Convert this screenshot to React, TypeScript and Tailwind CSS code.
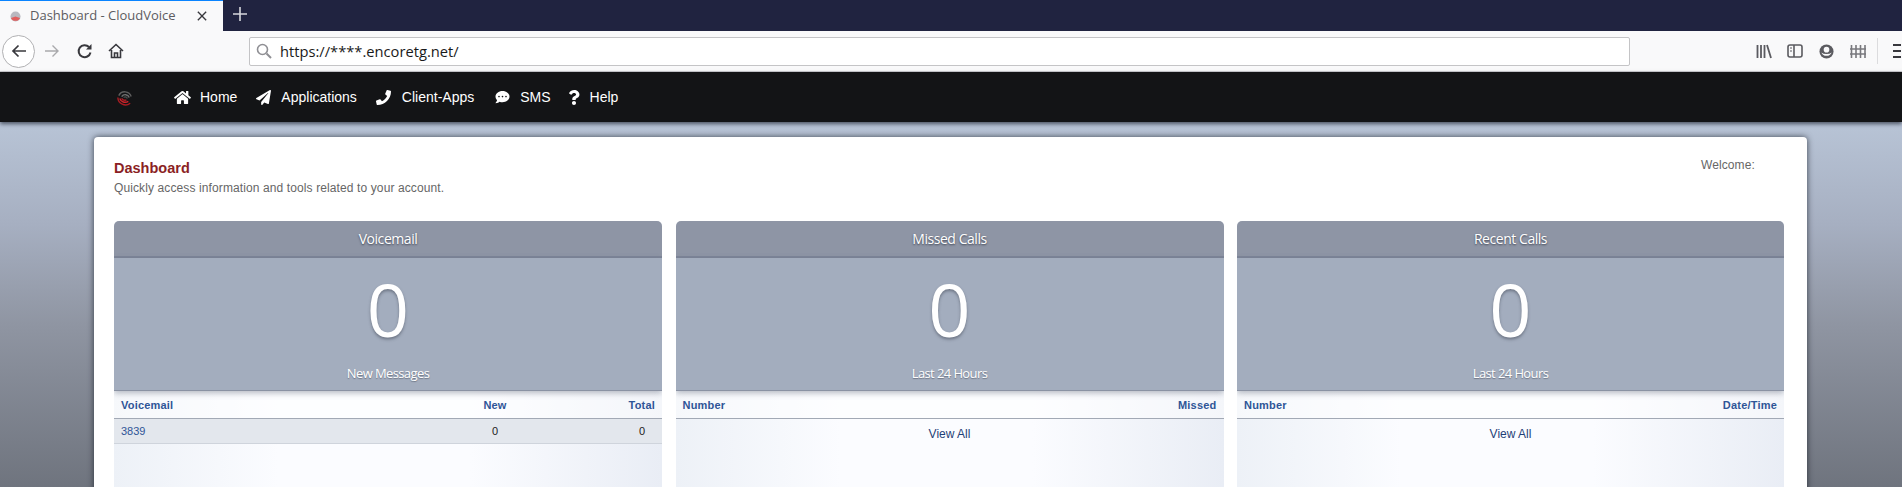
import React from 'react';
import { FaHome, FaPaperPlane, FaPhone, FaCommentDots, FaQuestion } from 'react-icons/fa';

const navItems = [
  { label: 'Home', icon: <FaHome className="w-[17px] h-[15px]" />, ml: 'ml-[40px]', gap: 'gap-[9px]' },
  { label: 'Applications', icon: <FaPaperPlane className="w-[15px] h-[15px]" />, ml: 'ml-[19px]', gap: 'gap-[10px]' },
  { label: 'Client-Apps', icon: <FaPhone className="w-[15px] h-[15px]" />, ml: 'ml-[19px]', gap: 'gap-[11px]' },
  { label: 'SMS', icon: <FaCommentDots className="w-[15px] h-[14px]" />, ml: 'ml-[21px]', gap: 'gap-[10px]' },
  { label: 'Help', icon: <FaQuestion className="w-[12px] h-[15px]" />, ml: 'ml-[17px]', gap: 'gap-[10px]' },
];

const BrowserChrome = () => (
  <div className="font-['Open_Sans',sans-serif]">
    {/* tab strip */}
    <div className="h-[31px] bg-[#202340] flex">
      <div className="w-[223px] h-full bg-[#f9f9fa] border-t border-[#0a84ff] flex items-center pl-[10px] text-[#5c5c61]">
        <svg viewBox="0 0 12 12" className="w-[11px] h-[11px] shrink-0">
          <circle cx="6" cy="6" r="5.5" fill="#b9b9c0" />
          <path d="M1 7.5 A5.5 5.5 0 0 0 11 7.5 L6 6 Z" fill="#e0605f" />
        </svg>
        <span className="ml-[9px] text-[13px] w-[167px] whitespace-nowrap">Dashboard - CloudVoice</span>
        <svg viewBox="0 0 12 12" className="w-[10px] h-[10px] shrink-0" stroke="#38383d" strokeWidth="1.6">
          <path d="M1 1 L11 11 M11 1 L1 11" />
        </svg>
      </div>
      <svg viewBox="0 0 14 14" className="w-[14px] h-[14px] ml-[10px] mt-[7px]" stroke="#d6d7dd" strokeWidth="1.6">
        <path d="M7 0 V14 M0 7 H14" />
      </svg>
    </div>
    {/* toolbar */}
    <div className="h-[41px] bg-[#f9f9fa] border-b border-[#cfcfd2] flex items-center">
      <div className="ml-[2px] w-[33px] h-[33px] rounded-full border border-[#b1b1b3] bg-white flex items-center justify-center">
        <svg viewBox="0 0 16 16" className="w-[16px] h-[16px]" fill="none" stroke="#38383d" strokeWidth="1.7">
          <path d="M15 8 H2 M7.5 2.5 L2 8 L7.5 13.5" />
        </svg>
      </div>
      <svg viewBox="0 0 16 16" className="w-[16px] h-[16px] ml-[9px]" fill="none" stroke="#a9a9ac" strokeWidth="1.4">
        <path d="M1 8 H14 M8.5 2.5 L14 8 L8.5 13.5" />
      </svg>
      <svg viewBox="0 0 16 16" className="w-[16px] h-[16px] ml-[17px]" fill="none" stroke="#38383d" strokeWidth="2">
        <path d="M13.5 9.5 A6 6 0 1 1 12 4" />
        <path d="M14.5 1 V6.5 H9 Z" fill="#38383d" stroke="none" />
      </svg>
      <svg viewBox="0 0 16 16" className="w-[16px] h-[16px] ml-[15px]" fill="none" stroke="#38383d" strokeWidth="1.6">
        <path d="M1 8 L8 1.5 L15 8 M3.5 7 V14.5 H12.5 V7" />
        <path d="M6.5 14.5 V10 H9.5 V14.5" />
      </svg>
      <div className="ml-[125px] w-[1381px] h-[29px] bg-white border border-[#c4c4c6] rounded-[2px] flex items-center">
        <svg viewBox="0 0 16 16" className="w-[16px] h-[16px] ml-[6px]" fill="none" stroke="#8f8f94" strokeWidth="1.6">
          <circle cx="6.5" cy="6.5" r="5" />
          <path d="M10.5 10.5 L15 15" strokeWidth="2" />
        </svg>
        <span className="ml-[8px] text-[14.7px] text-[#1a1a1a] whitespace-nowrap">https://****.encoretg.net/</span>
      </div>
      <svg viewBox="0 0 16 16" className="w-[16px] h-[16px] ml-[126px]" fill="none" stroke="#5b5b60" strokeWidth="1.8">
        <path d="M1.5 2 V15 M5 2 V15 M8.5 2 V15 M11 2 L15 15" />
      </svg>
      <svg viewBox="0 0 16 16" className="w-[16px] h-[16px] ml-[15px]" fill="none" stroke="#5b5b60" strokeWidth="1.6">
        <rect x="1" y="2" width="14" height="12" rx="2" />
        <path d="M7 2 V14" />
        <path d="M3 5 H5 M3 8 H5" strokeWidth="1" />
      </svg>
      <svg viewBox="0 0 16 16" className="w-[15px] h-[15px] ml-[16px]">
        <circle cx="8" cy="8" r="7.5" fill="#5b5b60" />
        <path d="M2.5 9 A6 6 0 0 0 13.5 9 A6.5 3.5 0 0 1 2.5 9 Z" fill="#f9f9fa" />
        <circle cx="8" cy="6" r="3" fill="#f9f9fa" />
      </svg>
      <svg viewBox="0 0 16 16" className="w-[16px] h-[16px] ml-[16px]" fill="none" stroke="#78787d" strokeWidth="1.8">
        <path d="M1.5 2 V15 M6 2 V15 M10.5 2 V15 M15 2 V15 M0 6 H16 M0 11 H16" strokeWidth="1.6" />
      </svg>
      <div className="w-px h-[26px] bg-[#dcdcde] ml-[11px]" />
      <div className="ml-[15px] w-[8px] flex flex-col gap-[4px] overflow-hidden">
        <div className="h-[2px] w-[12px] bg-[#38383d]" />
        <div className="h-[2px] w-[12px] bg-[#38383d]" />
        <div className="h-[2px] w-[12px] bg-[#38383d]" />
      </div>
    </div>
  </div>
);

const Logo = () => (
  <svg viewBox="0 0 20 20" className="w-[19px] h-[19px]" fill="none" strokeWidth="1.5">
    <path d="M4 8 A7 7 0 0 1 17 9" stroke="#5e5e5e" />
    <path d="M7 9 A4.5 4.5 0 0 1 15 10" stroke="#6e6e6e" />
    <path d="M9 10 A2.5 2.5 0 0 1 13 11" stroke="#4a4a4a" />
    <path d="M3 10 A8 8 0 0 0 16 16" stroke="#a81d23" />
    <path d="M5 11 A6 6 0 0 0 14 14" stroke="#d2232a" />
    <path d="M7 11 A4 4 0 0 0 12 12.5" stroke="#a81d23" />
  </svg>
);

const NavBar = () => (
  <div className="h-[50px] bg-[#131416] flex items-center pl-[115px] font-['Liberation_Sans',sans-serif] text-[14px] text-white shadow-[0_2px_4px_rgba(30,35,50,0.7)] relative">
    <Logo />
    {navItems.map((item) => (
      <div key={item.label} className={`flex items-center ${item.gap} ${item.ml}`}>
        {item.icon}
        <span>{item.label}</span>
      </div>
    ))}
  </div>
);

interface PanelProps {
  title: string;
  caption: string;
  children: React.ReactNode;
}

const Panel: React.FC<PanelProps> = ({ title, caption, children }) => (
  <div className="rounded-t-[5px] overflow-hidden h-[400px] bg-[linear-gradient(to_right,#edf1f7,#fbfcff_30%,#fbfcff_65%,#e9edf5)]">
    <div className="h-[37px] bg-[#8e95a5] border-b-2 border-[#7d8598] flex items-center justify-center font-['Open_Sans',sans-serif] text-[14px] tracking-[-0.45px] text-white [text-shadow:0_1px_2px_rgba(40,45,60,0.8)]">
      {title}
    </div>
    <div className="h-[133px] bg-[#a3adbe] border-b border-[#8a92a3] shadow-[0_2px_6px_rgba(90,100,120,0.45)] flex flex-col items-center font-['Open_Sans',sans-serif] text-white relative">
      <div className="text-[74px] leading-[74px] mt-[14px] [text-shadow:0_2px_3px_rgba(60,65,80,0.5)]">0</div>
      <div className="text-[13px] tracking-[-0.6px] leading-[18px] mt-[18px] [text-shadow:0_1px_1px_rgba(60,65,80,0.5)]">{caption}</div>
    </div>
    {children}
  </div>
);

const headCell = "text-[11px] font-bold tracking-[0.2px] text-[#2f5597]";
const headRow = "h-[28px] items-center px-[7px] pt-[1px] bg-white/50 border-b border-[#a2a9b5]";

const App: React.FC = () => (
  <div className="h-[487px] overflow-hidden bg-[linear-gradient(to_bottom,#b8c4d6_122px,#a6afc1_225px,#8f95a2_325px,#6f747e_487px)]">
    <BrowserChrome />
    <NavBar />
    <div className="mx-[94px] mt-[15px] w-[1713px] h-[500px] bg-white rounded-[4px] shadow-[0_0_6px_rgba(20,25,35,0.75)] pl-[20px] font-['Liberation_Sans',sans-serif]">
      <div className="flex justify-between pt-[23px] h-[84px]">
        <div>
          <h1 className="text-[14.5px] leading-[16px] font-bold text-[#8b1f24]">Dashboard</h1>
          <p className="text-[12px] tracking-[0.11px] leading-[14px] mt-[5px] text-[#666666]">Quickly access information and tools related to your account.</p>
        </div>
        <div className="text-[12px] tracking-[0.1px] leading-[14px] text-[#666666] w-[106px] -mt-[2px]">Welcome:</div>
      </div>
      <div className="grid grid-cols-[548px_548px_547px] gap-[13.5px]">
        <Panel title="Voicemail" caption="New Messages">
          <div className={`grid grid-cols-[1fr_60px_130px] ${headRow}`}>
            <span className={headCell}>Voicemail</span>
            <span className={`${headCell} text-center`}>New</span>
            <span className={`${headCell} text-right`}>Total</span>
          </div>
          <div className="grid grid-cols-[1fr_60px_130px] h-[25px] items-center px-[7px] bg-[#e3e7ed] border-b border-[#cfd4dc] text-[11px]">
            <span className="text-[#2f5597]">3839</span>
            <span className="text-center text-[#222222]">0</span>
            <span className="text-right pr-[10px] text-[#222222]">0</span>
          </div>
        </Panel>
        <Panel title="Missed Calls" caption="Last 24 Hours">
          <div className={`flex justify-between ${headRow}`}>
            <span className={headCell}>Number</span>
            <span className={headCell}>Missed</span>
          </div>
          <div className="text-center text-[12px] leading-[14px] mt-[8px] text-[#1f3f77]">View All</div>
        </Panel>
        <Panel title="Recent Calls" caption="Last 24 Hours">
          <div className={`flex justify-between ${headRow}`}>
            <span className={headCell}>Number</span>
            <span className={headCell}>Date/Time</span>
          </div>
          <div className="text-center text-[12px] leading-[14px] mt-[8px] text-[#1f3f77]">View All</div>
        </Panel>
      </div>
    </div>
  </div>
);

export default App;
